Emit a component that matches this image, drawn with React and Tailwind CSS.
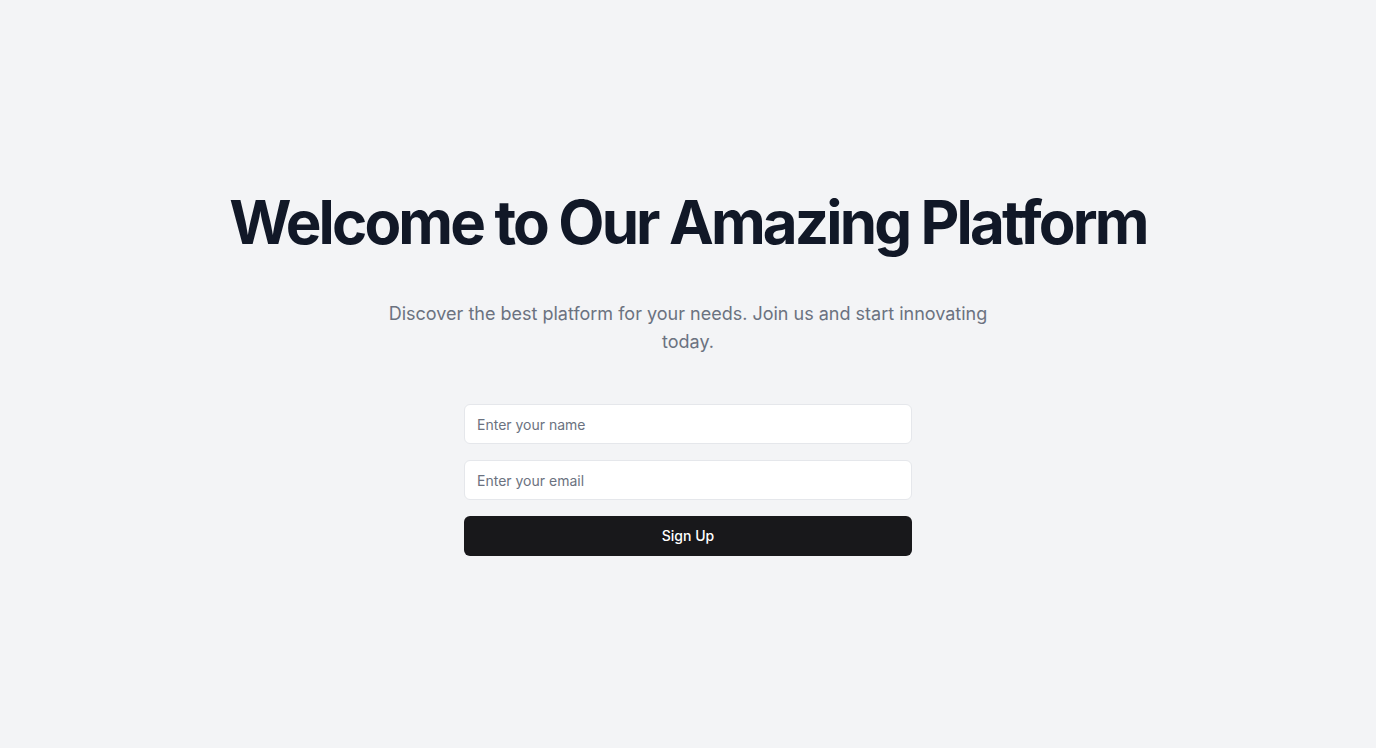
import React from "react";

export default function App() {
  return (
    <div
      className="min-h-screen w-full bg-[#f3f4f6] flex flex-col items-center justify-center px-4"
      style={{ fontFamily: "Inter, 'Liberation Sans', sans-serif" }}
    >
      <h1 className="text-6xl font-bold tracking-[-0.0478em] text-[#111827] text-center leading-none mb-12">
        Welcome to Our Amazing Platform
      </h1>
      <p className="text-lg text-[#6b7280] text-center max-w-[600px] leading-7 mb-12">
        Discover the best platform for your needs. Join us and start innovating today.
      </p>
      <form className="w-full max-w-md flex flex-col gap-4" onSubmit={(e) => e.preventDefault()}>
        <input
          type="text"
          placeholder="Enter your name"
          className="h-10 w-full rounded-md border border-[#e5e7eb] bg-white px-3 text-sm text-[#111827] placeholder:text-[#6b7280] outline-none"
        />
        <input
          type="email"
          placeholder="Enter your email"
          className="h-10 w-full rounded-md border border-[#e5e7eb] bg-white px-3 text-sm text-[#111827] placeholder:text-[#6b7280] outline-none"
        />
        <button
          type="submit"
          className="h-10 w-full rounded-md bg-[#18181b] text-sm font-medium text-white"
        >
          Sign Up
        </button>
      </form>
    </div>
  );
}
